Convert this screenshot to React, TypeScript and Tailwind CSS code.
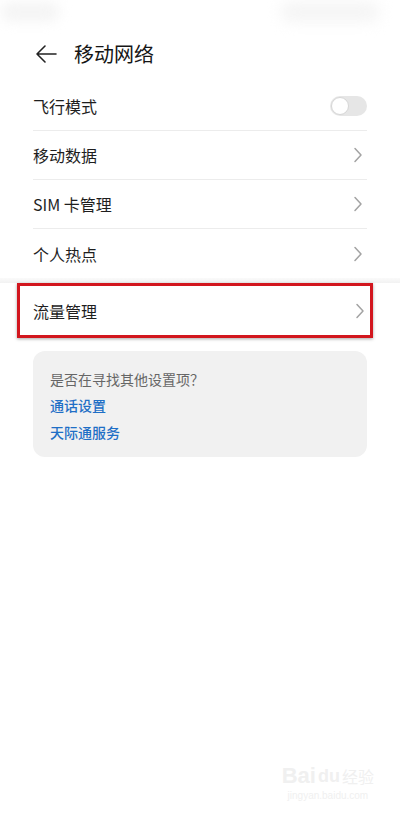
import React from "react";

const Chevron = () => (
  <svg width="10" height="16" viewBox="0 0 10 16" fill="none">
    <path d="M2 1.5 L8 8 L2 14.5" stroke="#a3a3a3" strokeWidth="1.5" strokeLinecap="round" strokeLinejoin="round" />
  </svg>
);

const Row = ({ label, right, divider = true }: { label: string; right: React.ReactNode; divider?: boolean }) => (
  <div className={`flex h-[49px] items-center justify-between ${divider ? "border-b border-[#ececec]" : ""}`}>
    <span className="text-[16px] text-[#1e1e1e]">{label}</span>
    <div className="flex items-center pr-[4px]">{right}</div>
  </div>
);

export default function App() {
  return (
    <div
      className="relative w-[400px] h-[816px] bg-white overflow-hidden"
      style={{ fontFamily: '"Noto Sans CJK SC", "Noto Sans", sans-serif' }}
    >
      {/* status bar blurred */}
      <div className="flex h-[30px] items-start justify-between">
        <div className="mt-[2px] h-[20px] w-[60px] rounded-full bg-[#f5f5f5] blur-[6px]" />
        <div className="mt-[2px] mr-[20px] h-[20px] w-[100px] rounded-full bg-[#f5f5f5] blur-[7px]" />
      </div>

      {/* header */}
      <div className="flex h-[48px] items-center pl-[35px]">
        <svg width="22" height="20" viewBox="0 0 22 20" fill="none">
          <path d="M21 10 H2 M10 2 L2 10 L10 18" stroke="#222" strokeWidth="1.6" strokeLinecap="round" strokeLinejoin="round" />
        </svg>
        <span className="ml-[17px] text-[20px] text-[#151515]">移动网络</span>
      </div>

      <div className="mt-[4px] px-[33px]">
        <Row
          label="飞行模式"
          right={
            <div className="flex h-[20px] w-[37px] items-center rounded-full bg-[#e6e6e6] pl-[1px] -mr-[4px]">
              <div className="h-[18px] w-[18px] rounded-full border border-[#d6d6d6] bg-white" />
            </div>
          }
        />
        <Row label="移动数据" right={<Chevron />} />
        <Row label="SIM 卡管理" right={<Chevron />} />
        <Row label="个人热点" right={<Chevron />} divider={false} />
      </div>

      <div className="h-[5px] bg-gradient-to-b from-[#fafafa] to-[#f2f2f2]" />

      <div className="ml-[17px] mr-[27px] flex h-[55px] items-center justify-between border-[3px] border-[#d2161e] pl-[13px] pr-[5px] shadow-[0_1px_3px_rgba(0,0,0,0.35)]">
        <span className="text-[16px] text-[#1e1e1e]">流量管理</span>
        <Chevron />
      </div>

      <div className="mx-[33px] mt-[13px] flex h-[106px] flex-col rounded-[12px] bg-[#f1f1f1] px-[17px] pt-[18px]">
        <span className="text-[14px] leading-[20px] text-[#666]">是否在寻找其他设置项？</span>
        <span className="mt-[6px] text-[14px] leading-[20px] font-medium text-[#1f6fc6]">通话设置</span>
        <span className="mt-[7px] text-[14px] leading-[20px] font-medium text-[#1f6fc6]">天际通服务</span>
      </div>

      {/* watermark */}
      <div className="absolute bottom-[14px] right-[26px] flex flex-col items-center gap-[2px] text-[#f0f0f0]">
        <div className="flex items-end gap-[2px] leading-[24px]" style={{ fontFamily: '"Liberation Sans", sans-serif' }}>
          <span className="text-[22px] font-bold">Bai</span>
          <span className="text-[18px] font-bold">du</span>
          <span className="text-[16px]" style={{ fontFamily: '"Noto Sans CJK SC", sans-serif' }}>经验</span>
        </div>
        <span className="text-[10px] leading-[12px]" style={{ fontFamily: '"Liberation Sans", sans-serif' }}>jingyan.baidu.com</span>
      </div>
    </div>
  );
}
